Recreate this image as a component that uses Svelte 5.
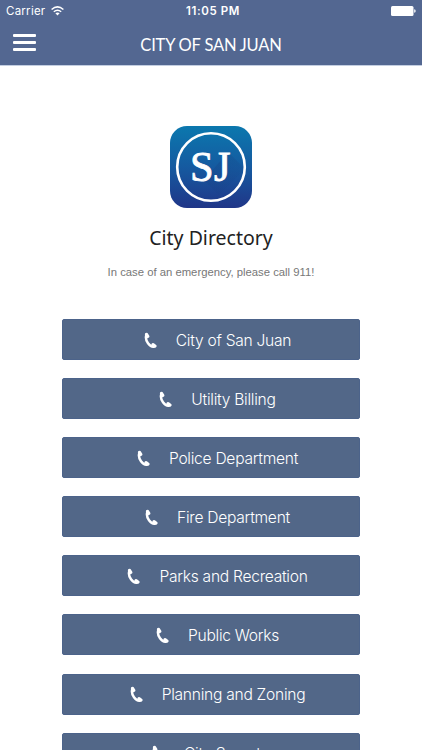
<script>
	const departments = [
		'City of San Juan',
		'Utility Billing',
		'Police Department',
		'Fire Department',
		'Parks and Recreation',
		'Public Works',
		'Planning and Zoning',
		'City Secretary'
	];
</script>

<div class="screen">
	<header>
		<div class="status">
			<div class="carrier">
				<span>Carrier</span>
				<svg width="13" height="10" viewBox="0 0 13 10" fill="none" stroke="#fff" stroke-width="1.5">
					<path d="M.6 3.5Q6.5-1.7 12.4 3.5M2.8 5.8q3.7-3.1 7.4 0" />
					<path d="M4.4 7.3q2.1-1.7 4.2 0L6.5 9.6z" fill="#fff" stroke="none" />
				</svg>
			</div>
			<span class="time">11:05 PM</span>
			<svg class="battery" width="25" height="10" viewBox="0 0 25 10" fill="#fff">
				<rect width="22.5" height="10" rx="1.5" />
				<path d="M23.2 3.2q1.5.3 1.5 1.8t-1.5 1.8z" />
			</svg>
		</div>
		<div class="navbar">
			<button class="menu" aria-label="Menu">
				<span></span>
				<span></span>
				<span></span>
			</button>
			<h1>CITY OF SAN JUAN</h1>
		</div>
	</header>

	<main>
		<svg class="logo" width="82" height="82" viewBox="0 0 82 82">
			<defs>
				<linearGradient id="logo-bg" x1="0" y1="0" x2="0" y2="1">
					<stop offset="0" stop-color="#0b78ae" />
					<stop offset=".5" stop-color="#155aa0" />
					<stop offset="1" stop-color="#203688" />
				</linearGradient>
				<linearGradient id="logo-shade" x1="0" y1="0" x2="1" y2="1">
					<stop offset="0" stop-color="#163d7d" stop-opacity=".35" />
					<stop offset="1" stop-color="#163d7d" stop-opacity="0" />
				</linearGradient>
			</defs>
			<rect width="82" height="82" rx="17" fill="url(#logo-bg)" />
			<path d="M58 26l17 17-26 26-15-15z" fill="url(#logo-shade)" />
			<circle cx="41" cy="41" r="33.8" fill="none" stroke="#fff" stroke-width="2.6" />
			<text x="20" y="55" letter-spacing="0.4">SJ</text>
		</svg>
		<h2>City Directory</h2>
		<p>In case of an emergency, please call 911!</p>

		<div class="directory">
			{#each departments as department}
				<button class="department">
					<svg width="13" height="17" viewBox="0 0 13 17" fill="none" stroke="#fff" stroke-linecap="round">
						<path d="M2.4 2.6Q.9 7 4 11.2T10.2 14.6" stroke-width="2.5" />
						<path d="M2.6 2.5L3.7 4.4M9 12.7L10.9 14" stroke-width="3.3" />
					</svg>
					<span>{department}</span>
				</button>
			{/each}
		</div>
	</main>
</div>

<style>
:global(body) {
	overflow: hidden;
}

.screen {
	background: #fff;
	height: 750px;
	overflow: hidden;
	width: 100%;
}

header {
	background: #536791;
	border-bottom: 1px solid #c3cee1;
	box-sizing: border-box;
	color: #fff;
	height: 66px;
}

.status {
	align-items: center;
	display: grid;
	font-family: Inter, sans-serif;
	font-size: 11.5px;
	grid-template-columns: 1fr auto 1fr;
	height: 21px;
	padding: 0 6px;
}

.carrier {
	align-items: center;
	display: flex;
	gap: 6px;
	letter-spacing: 0.25px;
}

.time {
	font-weight: 600;
	letter-spacing: 0.6px;
	padding-left: 4px;
}

.battery {
	justify-self: end;
}

.navbar {
	align-items: center;
	display: grid;
	grid-template-columns: 50px 1fr 50px;
	height: 44px;
	padding-top: 1px;
}

.menu {
	background: none;
	border: none;
	display: flex;
	flex-direction: column;
	gap: 4px;
	padding: 0 0 3px 13px;
}

.menu span {
	background: #fff;
	border-radius: 1px;
	height: 3px;
	width: 23px;
}

h1 {
	font-family: Lato, sans-serif;
	font-size: 16.5px;
	font-weight: 400;
	letter-spacing: -0.2px;
	line-height: 42px;
	margin: 0;
	padding-top: 2px;
	text-align: center;
}

main {
	align-items: center;
	display: flex;
	flex-direction: column;
	padding-top: 60px;
}

.logo text {
	fill: #fff;
	font-family: "Liberation Serif", serif;
	font-size: 42.5px;
	stroke: #fff;
	stroke-width: 0.8px;
}

h2 {
	color: #222;
	font-family: "Noto Sans", sans-serif;
	font-size: 19.5px;
	font-weight: 400;
	line-height: 28px;
	margin: 16px 0 0;
}

p {
	color: #777;
	font-family: "Liberation Sans", sans-serif;
	font-size: 11.3px;
	line-height: 16px;
	margin: 12px 0 0;
}

.directory {
	display: flex;
	flex-direction: column;
	gap: 18.1px;
	margin-top: 39px;
	width: 298px;
}

.department {
	align-items: center;
	background: #526788;
	border: 1px solid #4c638a;
	border-radius: 2px;
	box-sizing: border-box;
	color: #fff;
	display: flex;
	flex-shrink: 0;
	font-family: Inter, sans-serif;
	font-size: 15.6px;
	font-weight: 300;
	gap: 19px;
	height: 41px;
	justify-content: center;
	letter-spacing: -0.27px;
	padding: 1px 0 0 13px;
}
</style>
